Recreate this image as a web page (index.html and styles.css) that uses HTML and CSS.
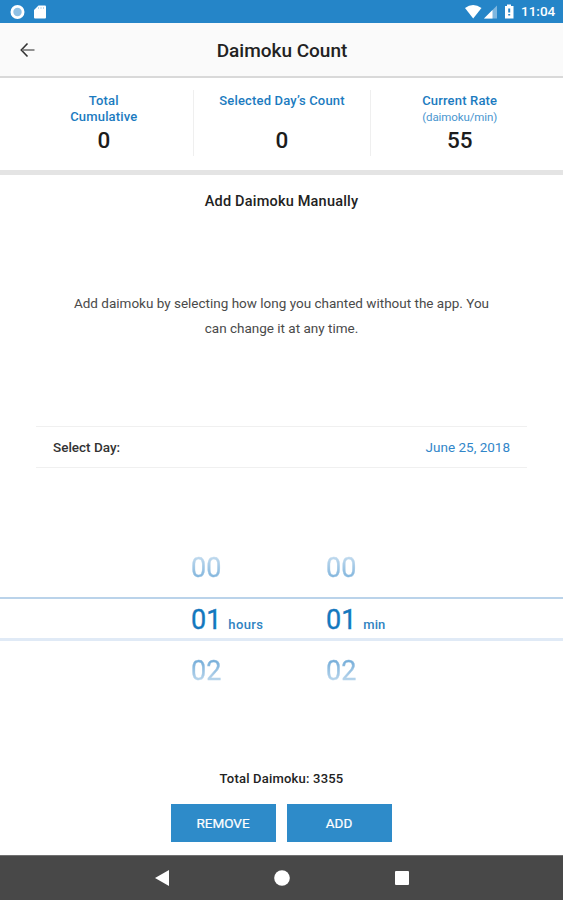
FILE: index.html
```html
<!DOCTYPE html>
<html lang="en">
<head>
<meta charset="utf-8">
<title>Daimoku Count</title>
<link rel="stylesheet" href="styles.css">
</head>
<body>
<div class="screen">
  <div class="status">
    <svg class="status-left" width="40" height="16" viewBox="0 0 40 16"><circle cx="7.5" cy="8" r="5.6" fill="#8fc0e4" stroke="#fff" stroke-width="2.8"/><path d="M28.500 1.500H35Q36 1.500 36 2.500V13.500Q36 14.500 35 14.500H25Q24 14.500 24 13.500V6Z" fill="#fff"/><path d="M28.500 3V5M31 3V5M33.500 3V5" stroke="#b9d8ee" stroke-width="1"/></svg>
    <svg class="status-right" width="50" height="16" viewBox="0 0 50 16"><path d="M0 4Q8 -2 16.500 4L8.200 14.500Z" fill="#fff"/><path d="M32 1.500V14.500H19Z" fill="#7fb7df"/><path d="M27.500 6V14.500H19Z" fill="#fff"/><path d="M42 0.500H46V2H48.500V14.500H40V2H42Z" fill="#fff"/><path d="M44.200 4.500V8.500M44.200 10V11.500" stroke="#2585c8" stroke-width="2"/></svg>
    <span class="clock">11:04</span>
  </div>
  <header class="bar">
    <svg class="back" width="16" height="16" viewBox="0 0 16 16"><path d="M7.500 1.500L1.300 8L7.500 14.500" fill="none" stroke="#333" stroke-width="1.600"/><path d="M2 8H14.500" stroke="#777" stroke-width="1.600"/></svg>
    <h1 class="title">Daimoku Count</h1>
  </header>
  <section class="stats">
    <div class="stat"><div class="label">Total<br>Cumulative</div><div class="value">0</div></div>
    <div class="stat"><div class="label">Selected Day’s Count</div><div class="value">0</div></div>
    <div class="stat"><div class="label">Current Rate<br><span class="unit">(daimoku/min)</span></div><div class="value">55</div></div>
  </section>
  <h2 class="heading">Add Daimoku Manually</h2>
  <p class="intro">Add daimoku by selecting how long you chanted without the app. You<br>can change it at any time.</p>
  <div class="day"><span class="day-label">Select Day:</span><span class="date">June 25, 2018</span></div>
  <div class="picker">
    <div class="row faded above"><span class="num">00</span><span class="num">00</span></div>
    <div class="row current"><span class="num">01<small class="hours">hours</small></span><span class="num">01<small>min</small></span></div>
    <div class="row faded below"><span class="num">02</span><span class="num">02</span></div>
  </div>
  <div class="total">Total Daimoku: 3355</div>
  <div class="actions"><button>REMOVE</button><button>ADD</button></div>
  <nav class="nav">
    <svg width="16" height="18" viewBox="0 0 16 18"><path d="M15 1V17L1 9Z" fill="#fff"/></svg>
    <svg width="16" height="18" viewBox="0 0 16 18"><circle cx="8" cy="9" r="7.800" fill="#fff"/></svg>
    <svg width="16" height="18" viewBox="0 0 16 18"><rect x="1" y="2" width="14" height="14" rx="1" fill="#fff"/></svg>
  </nav>
</div>
</body>
</html>
```

FILE: styles.css
```css
* { box-sizing: border-box; }
body { margin: 0; background: #fff; font-family: Roboto, "Liberation Sans", sans-serif; color: #222; }
.screen { width: 563px; height: 900px; overflow: hidden; display: flex; flex-direction: column; }
.screen > * { flex-shrink: 0; }

.status { height: 23px; background: #2585c8; display: flex; align-items: center; padding: 0 7px 0 10px; color: #fff; }
.status-left { margin-right: auto; }
.status-right { margin-right: 6px; }
.clock { font-size: 13.5px; font-weight: 500; line-height: 25px; width: 35px; white-space: nowrap; }

.bar { height: 55px; background: #fafafa; border-bottom: 2px solid #d9d9d9; display: flex; align-items: center; padding: 0 20px; }
.title { flex: 1; margin: 2px 15px 0 0; text-align: center; font-size: 19px; font-weight: 500; line-height: 24px; }

.stats { height: 97px; border-bottom: 5px solid #e4e4e4; display: grid; grid-template-columns: repeat(3, 1fr); padding: 12px 15px 14px; }
.stat { text-align: center; }
.stat + .stat { border-left: 1px solid #efefef; }
.label { height: 37px; padding-top: 3px; font-size: 13px; letter-spacing: 0.17px; line-height: 16px; font-weight: 500; color: #1b7bc0; white-space: nowrap; }
.unit { font-size: 11.5px; letter-spacing: -0.1px; font-weight: 400; color: #4a96cf; }
.value { font-size: 22.5px; line-height: 27px; font-weight: 500; color: #1c1c1c; }

.heading { margin: 16px 0 0; text-align: center; font-size: 14.5px; letter-spacing: 0.2px; line-height: 22px; font-weight: 500; }
.intro { margin: 78px 0 0; text-align: center; font-size: 13.5px; line-height: 25px; color: #4a4a4a; white-space: nowrap; }

.day { margin: 85px 36px 0; height: 42px; border: solid #f0f0f0; border-width: 1px 0; padding: 0 17px; display: flex; justify-content: space-between; align-items: center; font-size: 13.5px; }
.day-label { font-weight: 500; color: #333; }
.date { color: #3186c9; }

.picker { margin-top: 77px; color: #1478be; }
.row { display: grid; grid-template-columns: 135px 135px; padding-left: 191px; }
.num { font-size: 27px; line-height: 36px; height: 36px; font-weight: 400; -webkit-text-stroke: 0.35px currentColor; white-space: nowrap; }
.above { height: 52px; padding-top: 5px; }
.current { height: 44px; padding-top: 3px; border-top: 2px solid #bad3ea; border-bottom: 3px solid #e0eaf6; }
.below { height: 48px; padding-top: 12px; }
.num small { font-size: 13px; font-weight: 500; -webkit-text-stroke: 0; margin-left: 7px; color: #2f83c1; }
.num .hours { letter-spacing: 0.35px; }
.faded .num { width: 34px; color: transparent; background-clip: text; -webkit-background-clip: text; }
.above .num { background-image: linear-gradient(#bdd8ed 22%, #7eb3dc 80%); }
.below .num { background-image: linear-gradient(#78afda 22%, #bdd8ed 80%); }

.total { margin-top: 80px; text-align: center; font-size: 13px; letter-spacing: 0.2px; line-height: 20px; font-weight: 500; }
.actions { margin-top: 15px; display: flex; justify-content: center; gap: 11px; height: 38px; }
.actions button { width: 105px; height: 38px; border: 0; padding: 0 1px 0 0; background: #2e8bc9; color: #fff; font: 400 13.5px Roboto, sans-serif; -webkit-text-stroke: 0.2px #fff; }
.nav { margin-top: auto; height: 45px; background: #484848; border-top: 1px solid #707070; display: flex; justify-content: center; align-items: center; gap: 104px; }
```
